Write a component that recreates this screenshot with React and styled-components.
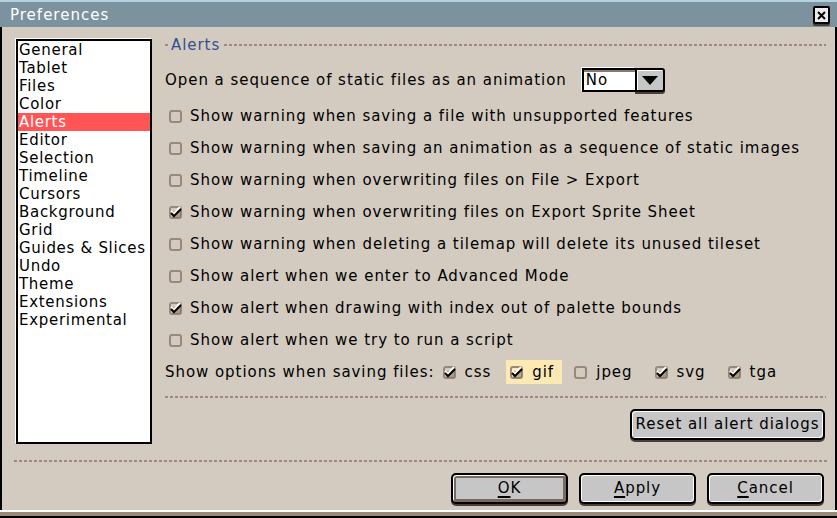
import styled, { createGlobalStyle } from "styled-components";

const GlobalStyle = createGlobalStyle`
    html, body { margin: 0; padding: 0; background: #000; }
    body { width: 837px; height: 518px; overflow: hidden; }
    * { box-sizing: border-box; }
`;

const FONT = `"DejaVu Sans", "Liberation Sans", sans-serif`;

const Window = styled.div`
    width: 837px;
    height: 518px;
    display: flex;
    flex-direction: column;
    background-color: #d3cbbf;
    font-family: ${FONT};
    font-size: 15px;
    letter-spacing: 0.95px;
    color: #000;
`;

const TitleBar = styled.div`
    height: 27px;
    flex-shrink: 0;
    background-color: #7d929f;
    border-top: 2px solid #b4d2e2;
    display: flex;
    align-items: center;
    justify-content: space-between;
    padding: 0 7px 0 10px;
`;

const Title = styled.span`
    color: #fff;
    font-size: 15px;
    letter-spacing: 1px;
`;

const CloseButton = styled.div`
    width: 17px;
    height: 18px;
    margin-top: 1px;
    background-color: #ececec;
    border: 2px solid #000;
    border-radius: 2px;
    box-shadow: 0 2px 0 #4a3f38;
    display: flex;
    align-items: center;
    justify-content: center;
`;

const Body = styled.div`
    flex: 1;
    display: flex;
    flex-direction: column;
    padding: 12px 9px 6px 14px;
    border-left: 2px solid #000;
    border-right: 2px solid #000;
`;

const BottomEdge = styled.div`
    height: 8px;
    flex-shrink: 0;
    border-top: 2px solid #fff;
    border-bottom: 2px solid #000;
    background-color: #9a8878;
`;

const Main = styled.div`
    display: flex;
    align-items: flex-start;
    gap: 13px;
`;

const List = styled.ul`
    list-style: none;
    margin: 0;
    padding: 0;
    width: 136px;
    height: 405px;
    background-color: #fff;
    border: 2px solid #000;
    box-shadow: -1px -1px 0 #fff;
`;

const ListItem = styled.li`
    height: 18px;
    line-height: 18px;
    padding-left: 1px;
    font-size: 15px;
    letter-spacing: 0.7px;
    background-color: ${p => (p.selected ? "#ff5555" : "transparent")};
    color: ${p => (p.selected ? "#fff" : "#000")};
`;

const Panel = styled.div`
    width: 661px;
    display: flex;
    flex-direction: column;
`;

const Dashed = styled.div`
    height: 2px;
    background-image: repeating-linear-gradient(to right, #a08a7c 0 3px, transparent 3px 5px);
`;

const Legend = styled.div`
    height: 12px;
    display: flex;
    align-items: center;
    gap: 2px;
`;

const LegendText = styled.span`
    color: #34508f;
    padding-right: 2px;
    margin-top: -1px;
`;

const Grow = styled(Dashed)`
    flex: 1;
`;

const Lead = styled(Dashed)`
    width: 4px;
`;

const Row = styled.div`
    height: 32px;
    display: flex;
    align-items: center;
    white-space: nowrap;
`;

const OpenRow = styled(Row)`
    margin-top: 13px;
    margin-bottom: 4px;
    gap: 15px;
`;

const CheckRow = styled(Row)`
    padding-left: 4px;
    gap: 8px;
`;

const Select = styled.div`
    display: flex;
    height: 24px;
`;

const SelectValue = styled.div`
    width: 53px;
    background-color: #fff;
    border: 2px solid #000;
    border-right: none;
    box-shadow: -1px -1px 0 #fff, inset 0 2px 0 #8a7a6e;
    padding-left: 2px;
    line-height: 20px;
`;

const SelectButton = styled.div`
    width: 30px;
    background-color: #c6c6c6;
    border: 2px solid #000;
    border-radius: 0 3px 3px 0;
    box-shadow: 0 2px 0 #4a3f38, inset 1px 1px 0 #fff;
    display: flex;
    align-items: center;
    justify-content: center;
`;

const OptionsRow = styled(Row)`
    gap: 0;
`;

const FileOption = styled.div`
    height: 24px;
    display: flex;
    align-items: center;
    gap: 9px;
    padding: 0 4px;
    margin-left: ${p => p.gapLeft}px;
    background-color: ${p => (p.hot ? "#fde9b4" : "transparent")};
    width: ${p => (p.hot ? "56px" : "auto")};
`;

const SectionLine = styled(Dashed)`
    margin-top: 8px;
`;

const ResetRow = styled.div`
    display: flex;
    justify-content: flex-end;
    margin-top: 11px;
    padding-right: 1px;
`;

const Button = styled.div`
    height: 31px;
    width: ${p => p.width}px;
    background-color: #c6c6c6;
    border: 2px solid #000;
    border-radius: 5px;
    box-shadow: 0 2px 0 #4a3f38, inset 1px 1px 0 #fff, inset -1px -1px 0 #fff;
    display: flex;
    align-items: center;
    justify-content: center;
    padding-bottom: 2px;
    white-space: nowrap;

    ${p => p.primary && `
        box-shadow: 0 2px 0 #4a3f38, inset 1px 1px 0 #fff, inset 0 0 0 3px #7a6a5e;
    `}

    u {
        text-decoration-thickness: 2px;
        text-underline-offset: 3px;
    }
`;

const FooterLine = styled(Dashed)`
    margin: 16px 0 0 -2px;
    width: 813px;
`;

const Buttons = styled.div`
    display: flex;
    justify-content: flex-end;
    gap: 11px;
    margin-top: 11px;
    padding-right: 2px;
`;

function CheckBox({ checked }) {
    return (
        <svg width="13" height="13" viewBox="0 0 13 13" style={{ flexShrink: 0 }}>
            <rect x="1" y="1" width="11" height="11" rx="2" fill="none" stroke="#9a8878" strokeWidth="2" />
            {checked && (
                <>
                    <rect x="3" y="5" width="9" height="7" fill="#7d6b5e" opacity="0.5" />
                    <polyline points="2,5 5,8 11,1" fill="none" stroke="#fff" strokeWidth="2" />
                    <polyline points="2,7 5,10 12,3" fill="none" stroke="#000" strokeWidth="2" />
                </>
            )}
        </svg>
    );
}

const sections = ["General", "Tablet", "Files", "Color", "Alerts", "Editor", "Selection", "Timeline", "Cursors", "Background", "Grid", "Guides & Slices", "Undo", "Theme", "Extensions", "Experimental"];

const alerts = [
    ["Show warning when saving a file with unsupported features", false],
    ["Show warning when saving an animation as a sequence of static images", false],
    ["Show warning when overwriting files on File > Export", false],
    ["Show warning when overwriting files on Export Sprite Sheet", true],
    ["Show warning when deleting a tilemap will delete its unused tileset", false],
    ["Show alert when we enter to Advanced Mode", false],
    ["Show alert when drawing with index out of palette bounds", true],
    ["Show alert when we try to run a script", false],
];

const formats = [
    { name: "css", checked: true, gapLeft: 4 },
    { name: "gif", checked: true, gapLeft: 11, hot: true },
    { name: "jpeg", checked: false, gapLeft: 8 },
    { name: "svg", checked: true, gapLeft: 14 },
    { name: "tga", checked: true, gapLeft: 14 },
];

function App() {
    return (
        <>
            <GlobalStyle />
            <Window>
                <TitleBar>
                    <Title>Preferences</Title>
                    <CloseButton>
                        <svg width="9" height="9" viewBox="0 0 9 9">
                            <path d="M1 1 L8 8 M8 1 L1 8" stroke="#000" strokeWidth="2" />
                        </svg>
                    </CloseButton>
                </TitleBar>
                <Body>
                    <Main>
                        <List>
                            {sections.map(s => <ListItem key={s} selected={s === "Alerts"}>{s}</ListItem>)}
                        </List>
                        <Panel>
                            <Legend>
                                <Lead />
                                <LegendText>Alerts</LegendText>
                                <Grow />
                            </Legend>
                            <OpenRow>
                                <span>Open a sequence of static files as an animation</span>
                                <Select>
                                    <SelectValue>No</SelectValue>
                                    <SelectButton>
                                        <svg width="16" height="9" viewBox="0 0 16 9">
                                            <path d="M0 0 H16 L8 9 Z" fill="#000" />
                                        </svg>
                                    </SelectButton>
                                </Select>
                            </OpenRow>
                            {alerts.map(([text, checked]) => (
                                <CheckRow key={text}>
                                    <CheckBox checked={checked} />
                                    <span>{text}</span>
                                </CheckRow>
                            ))}
                            <OptionsRow>
                                <span>Show options when saving files:</span>
                                {formats.map(f => (
                                    <FileOption key={f.name} gapLeft={f.gapLeft} hot={f.hot}>
                                        <CheckBox checked={f.checked} />
                                        <span>{f.name}</span>
                                    </FileOption>
                                ))}
                            </OptionsRow>
                            <SectionLine />
                            <ResetRow>
                                <Button width={195}>Reset all alert dialogs</Button>
                            </ResetRow>
                        </Panel>
                    </Main>
                    <FooterLine />
                    <Buttons>
                        <Button width={117} primary><u>O</u>K</Button>
                        <Button width={117}><u>A</u>pply</Button>
                        <Button width={117}><u>C</u>ancel</Button>
                    </Buttons>
                </Body>
                <BottomEdge />
            </Window>
        </>
    );
}

export default App;
